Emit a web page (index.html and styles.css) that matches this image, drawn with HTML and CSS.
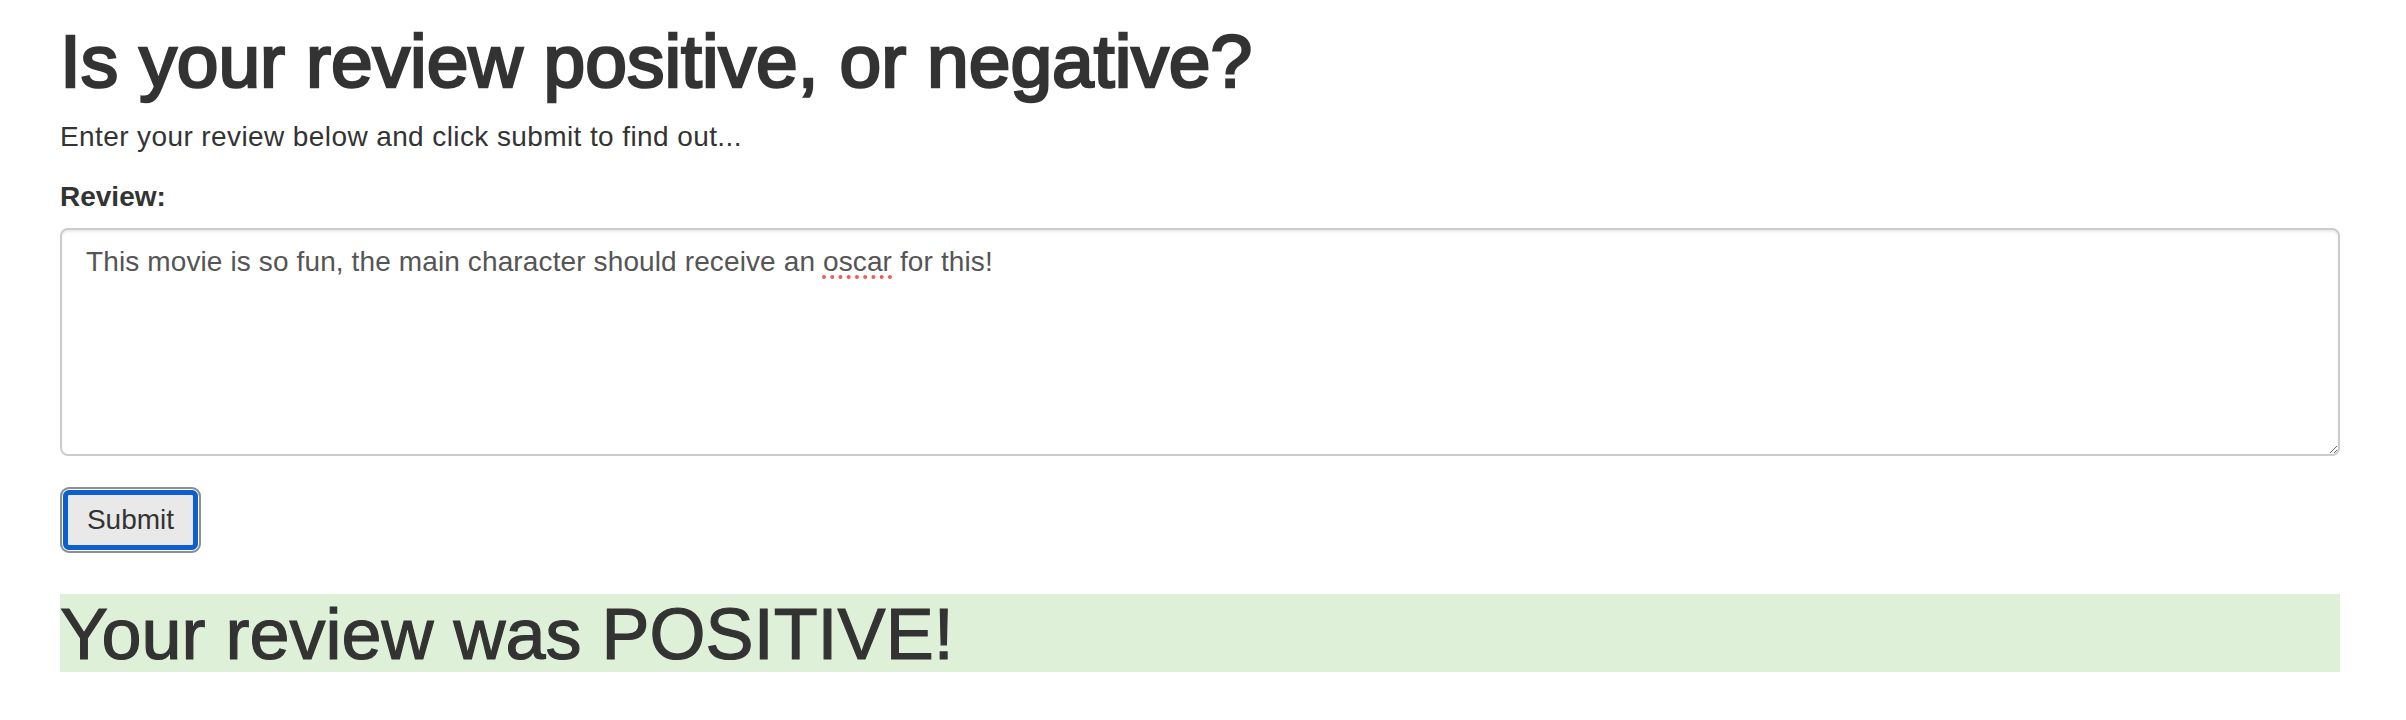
FILE: index.html
```html
<!DOCTYPE html>
<html lang="en">
<head>
<meta charset="utf-8">
<title>Sentiment</title>
<link rel="stylesheet" href="styles.css">
</head>
<body>
<div class="container">
  <h1 class="title">Is your review positive, or negative?</h1>
  <p class="lead">Enter your review below and click submit to find out...</p>
  <form class="form">
    <div class="form-group">
      <label class="label" for="review">Review:</label>
      <div class="textbox" id="review" role="textbox" contenteditable="true">This movie is so fun, the main character should receive an <span class="misspelled">oscar</span> for this!</div>
    </div>
    <button type="button" class="btn">Submit</button>
  </form>
  <h1 class="result">Your review was POSITIVE!</h1>
</div>
</body>
</html>
```

FILE: styles.css
```css
html, body {
  margin: 0;
  padding: 0;
  background: #fff;
}
body {
  font-family: "Liberation Sans", Arial, Helvetica, sans-serif;
  color: #333;
  font-size: 28px;
  line-height: 40px;
}
.container {
  width: 2280px;
  margin-left: 60px;
}
.title {
  font-size: 75px;
  line-height: 82px;
  font-weight: 400;
  -webkit-text-stroke: 2.6px #333;
  margin: 20px 0 15px;
}
.lead {
  margin: 0 0 20px;
  letter-spacing: 0.4px;
}
.form {
  margin: 0;
}
.form-group {
  margin-bottom: 31px;
}
.label {
  display: block;
  font-weight: 700;
  margin-bottom: 11px;
}
.textbox {
  box-sizing: border-box;
  height: 228px;
  border: 2px solid #ccc;
  border-radius: 8px;
  padding: 12px 24px;
  color: #555;
  letter-spacing: 0.12px;
  box-shadow: inset 0 2px 2px rgba(0, 0, 0, 0.075);
  resize: both;
  overflow: auto;
  outline: none;
  white-space: pre-wrap;
}
.misspelled {
  text-decoration: underline dotted #f25a5a;
  text-decoration-thickness: 4px;
  text-underline-offset: 4px;
}
.btn {
  box-sizing: border-box;
  display: block;
  width: 141px;
  height: 66px;
  padding: 0;
  font-family: inherit;
  font-size: 28px;
  line-height: 40px;
  color: #333;
  background: #e9e9e9;
  border: 2px solid #8e8e8e;
  border-radius: 9px;
  box-shadow: inset 0 0 0 1px #fff, inset 0 0 0 6px #0b5fcf;
}
.result {
  margin: 41px 0 0;
  padding-top: 3px;
  font-size: 72px;
  line-height: 75px;
  font-weight: 400;
  -webkit-text-stroke: 1.2px #333;
  background: #dff0d8;
}
```
